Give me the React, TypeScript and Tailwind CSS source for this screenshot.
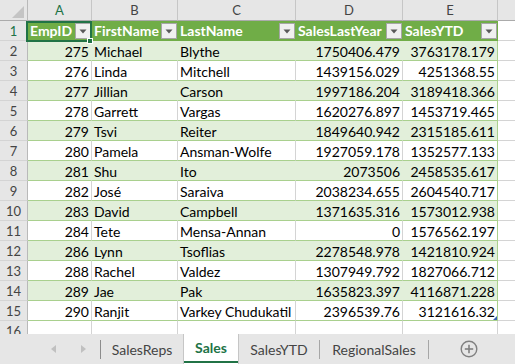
import React from "react";

const rows: string[][] = [
  ["275", "Michael", "Blythe", "1750406.479", "3763178.179"],
  ["276", "Linda", "Mitchell", "1439156.029", "4251368.55"],
  ["277", "Jillian", "Carson", "1997186.204", "3189418.366"],
  ["278", "Garrett", "Vargas", "1620276.897", "1453719.465"],
  ["279", "Tsvi", "Reiter", "1849640.942", "2315185.611"],
  ["280", "Pamela", "Ansman-Wolfe", "1927059.178", "1352577.133"],
  ["281", "Shu", "Ito", "2073506", "2458535.617"],
  ["282", "José", "Saraiva", "2038234.655", "2604540.717"],
  ["283", "David", "Campbell", "1371635.316", "1573012.938"],
  ["284", "Tete", "Mensa-Annan", "0", "1576562.197"],
  ["286", "Lynn", "Tsoflias", "2278548.978", "1421810.924"],
  ["288", "Rachel", "Valdez", "1307949.792", "1827066.712"],
  ["289", "Jae", "Pak", "1635823.397", "4116871.228"],
  ["290", "Ranjit", "Varkey Chudukatil", "2396539.76", "3121616.32"],
];

const colW = ["w-[64px]", "w-[86px]", "w-[118px]", "w-[107px]", "w-[95px]"];
const letters = ["A", "B", "C", "D", "E"];
const headers = ["EmpID", "FirstName", "LastName", "SalesLastYear", "SalesYTD"];
const numeric = [true, false, false, true, true];

function RowHead({ n, active }: { n: number; active?: boolean }) {
  return (
    <div
      className={
        "w-[28px] shrink-0 h-full box-border border-r border-b border-r-[#b9b9b9] border-b-[#d4d4d4] bg-[#e6e6e6] text-center text-[13px] leading-[20px] " +
        (active ? "text-[#217346]" : "text-[#444]")
      }
    >
      {n}
    </div>
  );
}

function FilterBtn() {
  return (
    <div className="w-[16px] h-[16px] shrink-0 box-border border border-[#a6a6a6] bg-[#f0f0f0] flex items-center justify-center">
      <svg width="8" height="5" viewBox="0 0 8 5">
        <polygon points="0.5,0.5 7.5,0.5 4,4.5" fill="#595959" />
      </svg>
    </div>
  );
}

export default function App() {
  return (
    <div className="w-[515px] h-[364px] overflow-hidden flex flex-col bg-white font-['Lato','Liberation_Sans',sans-serif] text-black">
      <div className="flex-1 overflow-hidden flex flex-col">
        {/* column header */}
        <div className="flex h-[21px] shrink-0">
          <div className="w-[28px] shrink-0 h-full box-border border-r border-b border-r-[#b9b9b9] border-b-[#ababab] bg-[#e6e6e6] flex items-end justify-end pr-[3px] pb-[2px]">
            <svg width="12" height="12" viewBox="0 0 12 12">
              <polygon points="12,0 12,12 0,12" fill="#c4c4c4" />
            </svg>
          </div>
          {letters.map((l, i) => (
            <div
              key={l}
              className={
                colW[i] +
                " shrink-0 h-full box-border border-r border-b border-r-[#c6c6c6] border-b-[#ababab] bg-[#e6e6e6] text-center text-[13px] leading-[21px] " +
                (i === 0 ? "text-[#217346]" : "text-[#444]")
              }
            >
              {l}
            </div>
          ))}
          <div className="flex-1 h-full box-border border-b border-b-[#ababab] bg-[#e6e6e6]" />
        </div>

        {/* header row */}
        <div className="flex h-[20px] shrink-0">
          <RowHead n={1} active />
          {headers.map((h, i) => (
            <div
              key={h}
              className={
                colW[i] +
                " shrink-0 h-full box-border border-r border-r-[#70ad47] bg-[#70ad47] relative flex items-center justify-between pl-[2px] text-white font-bold text-[14px] whitespace-nowrap"
              }
            >
              <span className="leading-[20px]">{h}</span>
              <FilterBtn />
              {i === 0 && (
                <div className="absolute left-[-2px] top-0 w-[66px] h-[21px] box-border border-2 border-[#217346] z-10 pointer-events-none">
                  <div className="absolute left-[59px] top-[15px] w-[6px] h-[6px] box-border border border-white bg-[#217346]" />
                </div>
              )}
            </div>
          ))}
          <div className="flex-1 h-full box-border border-b border-b-[#d4d4d4]" />
        </div>

        {/* data rows */}
        {rows.map((r, ri) => {
          const n = ri + 2;
          const band = n % 2 === 0;
          return (
            <div key={n} className="flex h-[20px] shrink-0">
              <RowHead n={n} />
              {r.map((v, i) => (
                <div
                  key={i}
                  className={
                    colW[i] +
                    " shrink-0 h-full box-border border-r border-b border-b-[#a9d08e] whitespace-nowrap text-[14px] leading-[21px] relative " +
                    (band ? "bg-[#e2efda] " : "bg-white ") +
                    (i === 4 ? "border-r-[#a9d08e] " : band ? "border-r-[#e2efda] " : "border-r-[#d4d4d4] ") +
                    (numeric[i] ? "text-right pr-[2px]" : "pl-[2px]")
                  }
                >
                  {v}
                  {n === 15 && i === 4 && (
                    <svg className="absolute right-0 bottom-0" width="4" height="4" viewBox="0 0 4 4">
                      <polygon points="4,0 4,4 0,4" fill="#3b64b4" />
                    </svg>
                  )}
                </div>
              ))}
              <div className="flex-1 h-full box-border border-b border-b-[#d4d4d4]" />
            </div>
          );
        })}

        {/* empty row 16 */}
        <div className="flex h-[20px] shrink-0">
          <RowHead n={16} />
          {colW.map((w, i) => (
            <div key={i} className={w + " shrink-0 h-full box-border border-r border-b border-[#d4d4d4]"} />
          ))}
          <div className="flex-1 h-full box-border border-b border-b-[#d4d4d4]" />
        </div>
      </div>

      {/* sheet tabs */}
      <div className="h-[30px] shrink-0 flex bg-[#e6e6e6] text-[14px] text-[#444]">
        <div className="w-[100px] shrink-0 flex items-center">
          <div className="w-[57px] flex justify-end pr-[1px]">
            <svg width="5" height="8" viewBox="0 0 5 8">
              <polygon points="5,0 5,8 0,4" fill="#c0c0c0" />
            </svg>
          </div>
          <div className="w-[29px] flex justify-end">
            <svg width="5" height="8" viewBox="0 0 5 8">
              <polygon points="0,0 0,8 5,4" fill="#c0c0c0" />
            </svg>
          </div>
        </div>
        <div className="w-px h-[19px] self-center bg-[#8c8c8c]" />
        <div className="w-[82px] shrink-0 flex items-center justify-center">SalesReps</div>
        <div className="w-[56px] shrink-0 box-border border-x border-[#c6c6c6] bg-white flex flex-col">
          <div className="flex-1 flex items-center justify-center font-bold text-[#217346]">Sales</div>
          <div className="h-[2px] bg-[#217346] mb-[1px]" />
        </div>
        <div className="w-[80px] shrink-0 flex items-center justify-center">SalesYTD</div>
        <div className="w-px h-[19px] self-center bg-[#a6a6a6]" />
        <div className="w-[108px] shrink-0 flex items-center justify-center">RegionalSales</div>
        <div className="w-px h-[19px] self-center bg-[#a6a6a6]" />
        <div className="w-[80px] shrink-0 flex items-center justify-center">
          <svg width="18" height="18" viewBox="0 0 18 18">
            <circle cx="9" cy="9" r="7.8" fill="none" stroke="#808080" strokeWidth="1.4" />
            <line x1="9" y1="4.8" x2="9" y2="13.2" stroke="#808080" strokeWidth="1.6" />
            <line x1="4.8" y1="9" x2="13.2" y2="9" stroke="#808080" strokeWidth="1.6" />
          </svg>
        </div>
      </div>
    </div>
  );
}
